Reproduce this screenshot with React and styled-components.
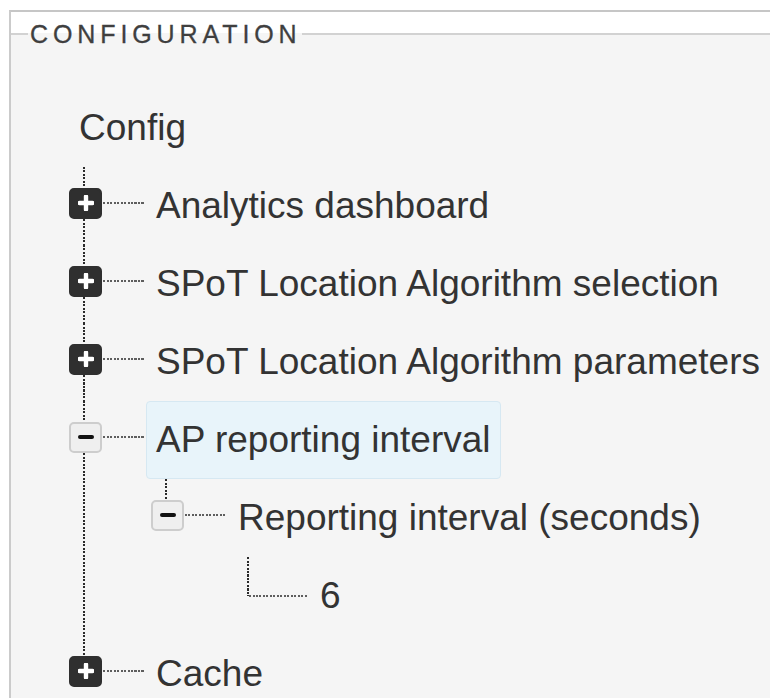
import React from "react";
import styled, { createGlobalStyle } from "styled-components";

const GlobalStyle = createGlobalStyle`
  html, body { margin: 0; padding: 0; overflow: hidden; background: #ffffff; }
  body { padding: 10px 0 0 9px; font-family: "Liberation Sans", Arial, Helvetica, sans-serif; }
  * { box-sizing: border-box; }
`;

const Panel = styled.div`
  border-top: 2px solid #c6c6c6;
  border-left: 2px solid #cbcbcb;
  background: #ffffff;
  height: 700px;
  display: flex;
  flex-direction: column;
`;

const TopGap = styled.div`
  height: 10px;
  flex: none;
`;

const Section = styled.fieldset`
  margin: 0;
  padding: 43px 0 0 0;
  min-width: 0;
  border: 0;
  border-top: 2px solid #d2d2d2;
  background: #f5f5f5;
  flex: 1;
`;

const Legend = styled.legend`
  margin-left: 17px;
  padding: 0 0 0 2px;
  font-size: 25px;
  line-height: 24px;
  letter-spacing: 4.9px;
  color: #3f3f3f;
  text-transform: uppercase;
  -webkit-text-stroke: 0.3px #3f3f3f;
`;

const Tree = styled.div`
  padding-left: 57px;
  color: #333333;
  font-size: 37px;
`;

const RootLabel = styled.div`
  display: inline-block;
  padding: 0 10px;
  line-height: 76px;
  border: 1px solid transparent;
  white-space: nowrap;
`;

const List = styled.ul`
  margin: 0;
  padding: 0 0 0 ${(p) => (p.$root ? 1 : 82)}px;
`;

const Item = styled.li`
  position: relative;
  list-style: none;
  &::before {
    content: "";
    position: absolute;
    left: 14px;
    top: 0;
    width: 2px;
    ${(p) => (p.$last ? `height: ${p.$leaf ? 39 : 21}px;` : "bottom: 0;")}
    background: repeating-linear-gradient(to bottom, #2a2a2a 0 2px, transparent 2px 3.5px);
  }
`;

const Row = styled.div`
  display: flex;
  align-items: center;
  height: 78px;
`;

const Toggle = styled.span`
  position: relative;
  z-index: 1;
  flex: none;
  width: 33px;
  height: 31px;
  margin-bottom: 6px;
  border-radius: 5px;
  display: flex;
  align-items: center;
  justify-content: center;
  background: ${(p) => (p.$open ? "#efefef" : "#2f2f2f")};
  border: 2px solid ${(p) => (p.$open ? "#cdcdcd" : "#2f2f2f")};
`;

const Connector = styled.span`
  flex: none;
  height: 2px;
  width: ${(p) => (p.$leaf ? 59 : 41)}px;
  margin-left: ${(p) => (p.$leaf ? 16 : 1)}px;
  margin-bottom: ${(p) => (p.$leaf ? 0 : 6)}px;
  background: repeating-linear-gradient(to right, #5e5e5e 0 2px, transparent 2px 3.5px);
`;

const Label = styled.span`
  margin-left: 2px;
  padding: 0 9px;
  line-height: 76px;
  border-radius: 4px;
  white-space: nowrap;
  border: 1px solid ${(p) => (p.$selected ? "#d6e8f2" : "transparent")};
  background: ${(p) => (p.$selected ? "#e8f4fa" : "transparent")};
`;

const PlusIcon = () => (
  <svg width="16" height="16" viewBox="0 0 16 16" aria-hidden="true">
    <path d="M8 1.5v13M1.5 8h13" stroke="#ffffff" strokeWidth="4.4" strokeLinecap="round" />
  </svg>
);

const MinusIcon = () => (
  <svg width="16" height="16" viewBox="0 0 16 16" aria-hidden="true">
    <path d="M2 8h12" stroke="#111111" strokeWidth="4" strokeLinecap="round" />
  </svg>
);

const data = {
  label: "Config",
  children: [
    { label: "Analytics dashboard", collapsed: true },
    { label: "SPoT Location Algorithm selection", collapsed: true },
    { label: "SPoT Location Algorithm parameters", collapsed: true },
    {
      label: "AP reporting interval",
      selected: true,
      children: [
        {
          label: "Reporting interval (seconds)",
          children: [{ label: "6" }],
        },
      ],
    },
    { label: "Cache", collapsed: true },
  ],
};

function Node({ node, last }) {
  const hasKids = node.collapsed || (node.children && node.children.length > 0);
  const open = hasKids && !node.collapsed;
  return (
    <Item $last={last} $leaf={!hasKids}>
      <Row>
        {hasKids ? (
          <>
            <Toggle $open={open}>{open ? <MinusIcon /> : <PlusIcon />}</Toggle>
            <Connector />
          </>
        ) : (
          <Connector $leaf />
        )}
        <Label $selected={node.selected}>{node.label}</Label>
      </Row>
      {open && (
        <List>
          {node.children.map((c, i) => (
            <Node key={c.label} node={c} last={i === node.children.length - 1} />
          ))}
        </List>
      )}
    </Item>
  );
}

export default function App() {
  return (
    <>
      <GlobalStyle />
      <Panel>
        <TopGap />
        <Section>
          <Legend>Configuration</Legend>
          <Tree>
            <RootLabel>{data.label}</RootLabel>
            <List $root>
              {data.children.map((c, i) => (
                <Node key={c.label} node={c} last={i === data.children.length - 1} />
              ))}
            </List>
          </Tree>
        </Section>
      </Panel>
    </>
  );
}
